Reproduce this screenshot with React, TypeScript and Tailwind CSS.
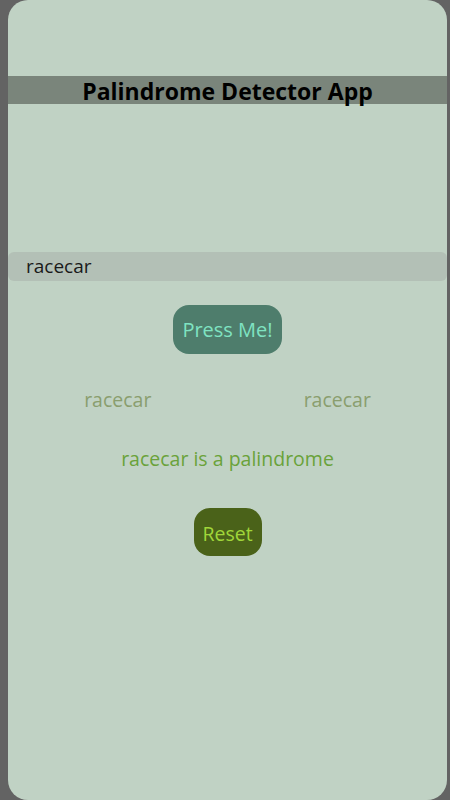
export default function App() {
  const font = { fontFamily: '"Open Sans", "Noto Sans", sans-serif' };
  return (
    <div className="w-[450px] h-[800px] bg-[#636363] pl-[8px] pr-[3px]" style={font}>
      <div className="h-full bg-[#c0d2c4] rounded-[20px] flex flex-col items-center pt-[76px]">
        <div className="w-full h-[28px] bg-[#7a857b] flex items-center justify-center">
          <h1 className="text-[23px] font-bold text-black leading-none pt-[3px]">Palindrome Detector App</h1>
        </div>
        <div className="w-full mt-[148px] h-[29px] bg-[#b3c0b6] rounded-[6px] flex items-center pl-[18px]">
          <span className="text-[19px] text-[#1a1a1a] leading-none">racecar</span>
        </div>
        <button className="mt-[24px] w-[109px] h-[49px] rounded-[16px] bg-[#4e7d6c] text-[#7fe3c2] text-[20px] leading-none">
          Press Me!
        </button>
        <div className="w-full mt-[33px] grid grid-cols-2 text-center">
          <span className="text-[19.5px] text-[#8a9e6e] leading-[26px]">racecar</span>
          <span className="text-[19.5px] text-[#8a9e6e] leading-[26px]">racecar</span>
        </div>
        <div className="mt-[33px] text-[19.5px] text-[#6aa23a] leading-[26px]">racecar is a palindrome</div>
        <button className="mt-[36px] w-[68px] h-[48px] rounded-[16px] bg-[#4a6219] text-[#a0d63a] text-[19.5px] leading-none pt-[4px]">
          Reset
        </button>
      </div>
    </div>
  );
}
